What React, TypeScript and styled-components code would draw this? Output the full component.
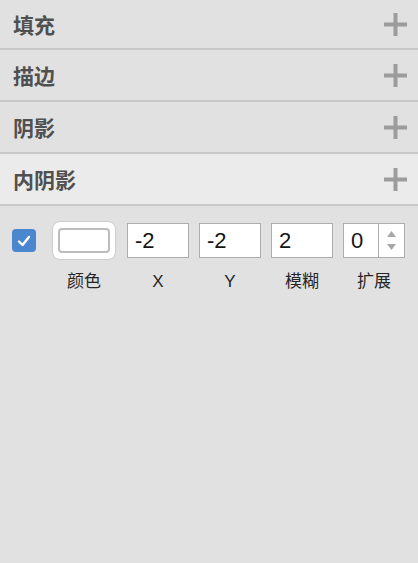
import React from 'react';
import styled, { createGlobalStyle } from 'styled-components';

const GlobalStyle = createGlobalStyle`
    html, body {
        margin: 0;
        padding: 0;
        background: #e1e1e1;
    }
    body {
        width: 418px;
        height: 563px;
        overflow: hidden;
        font-family: "Liberation Sans", "Noto Sans CJK SC", sans-serif;
    }
`;

const Panel = styled.div`
    display: flex;
    flex-direction: column;
    width: 418px;
    height: 563px;
    background: #e1e1e1;
`;

interface SectionHeaderProps {
    active?: boolean;
    first?: boolean;
}

const SectionHeader = styled.div<SectionHeaderProps>`
    display: flex;
    align-items: center;
    justify-content: space-between;
    height: ${props => (props.first ? 48 : 50)}px;
    padding: 0 11px 0 13px;
    border-bottom: 2px solid #c8c8c8;
    background: ${props => (props.active ? '#ebebeb' : '#e1e1e1')};
`;

const SectionTitle = styled.span`
    font-family: "Noto Sans CJK SC", sans-serif;
    font-size: 21px;
    font-weight: 700;
    color: #505050;
    line-height: 1;
`;

const AddButton = styled.button`
    display: flex;
    align-items: center;
    justify-content: center;
    width: 23px;
    height: 23px;
    padding: 0;
    border: none;
    background: none;
`;

const ControlsRow = styled.div`
    display: flex;
    align-items: flex-start;
    padding: 15px 0 0 12px;
`;

interface FieldProps {
    gapAfter: number;
}

const Field = styled.div<FieldProps>`
    display: flex;
    flex-direction: column;
    align-items: center;
    margin-right: ${props => props.gapAfter}px;
`;

const ControlSlot = styled.div`
    display: flex;
    align-items: center;
    height: 39px;
`;

const FieldLabel = styled.span`
    margin-top: 12px;
    font-family: "Liberation Sans", "Noto Sans CJK SC", sans-serif;
    font-size: 17px;
    line-height: 20px;
    color: #262626;
`;

const Checkbox = styled.div`
    display: flex;
    align-items: center;
    justify-content: center;
    width: 24px;
    height: 23px;
    border-radius: 4px;
    background: #4a87cf;
`;

const Swatch = styled.div`
    display: flex;
    align-items: center;
    justify-content: center;
    box-sizing: border-box;
    width: 64px;
    height: 39px;
    border-radius: 8px;
    border: 1px solid #cdcdcd;
    background: #fff;
`;

const SwatchColor = styled.div`
    box-sizing: border-box;
    width: 52px;
    height: 25px;
    border-radius: 4px;
    border: 2px solid #bdbdbd;
    background: #fff;
`;

const NumberBox = styled.div`
    display: flex;
    box-sizing: border-box;
    width: 62px;
    height: 35px;
    border: 1px solid #adadad;
    background: #fff;
`;

const NumberText = styled.span`
    flex: 1;
    padding-left: 7px;
    font-family: "Liberation Sans", Arial, sans-serif;
    font-size: 22px;
    line-height: 33px;
    color: #151515;
`;

const Stepper = styled.div`
    display: flex;
    flex-direction: column;
    align-items: center;
    justify-content: center;
    gap: 7px;
    width: 25px;
    border-left: 1px solid #adadad;
`;

const Plus = () => (
    <svg width="23" height="23" viewBox="0 0 23 23">
        <rect x="9.5" y="0" width="4" height="23" fill="#9c9c9c" />
        <rect x="0" y="9.5" width="23" height="4" fill="#9c9c9c" />
    </svg>
);

const Check = () => (
    <svg width="14" height="12" viewBox="0 0 14 12">
        <path d="M2 6.5 L5.5 10 L12 2" fill="none" stroke="#fff" strokeWidth="2.4" strokeLinecap="round" strokeLinejoin="round" />
    </svg>
);

const Arrow = ({ up }: { up?: boolean }) => (
    <svg width="9" height="6" viewBox="0 0 9 6">
        <path d={up ? 'M4.5 0 L9 6 L0 6 Z' : 'M0 0 L9 0 L4.5 6 Z'} fill="#a8a8a8" />
    </svg>
);

const sections = ['填充', '描边', '阴影', '内阴影'];

const numberFields = [
    { label: 'X', value: '-2' },
    { label: 'Y', value: '-2' },
    { label: '模糊', value: '2' },
];

const App: React.FunctionComponent = () => {
    return (
        <Panel>
            <GlobalStyle />
            {sections.map((title, i) => (
                <SectionHeader key={title} first={i === 0} active={i === sections.length - 1}>
                    <SectionTitle>{title}</SectionTitle>
                    <AddButton><Plus /></AddButton>
                </SectionHeader>
            ))}
            <ControlsRow>
                <Field gapAfter={16}>
                    <ControlSlot>
                        <Checkbox><Check /></Checkbox>
                    </ControlSlot>
                </Field>
                <Field gapAfter={11}>
                    <ControlSlot>
                        <Swatch><SwatchColor /></Swatch>
                    </ControlSlot>
                    <FieldLabel>颜色</FieldLabel>
                </Field>
                {numberFields.map(f => (
                    <Field key={f.label} gapAfter={10}>
                        <ControlSlot>
                            <NumberBox><NumberText>{f.value}</NumberText></NumberBox>
                        </ControlSlot>
                        <FieldLabel>{f.label}</FieldLabel>
                    </Field>
                ))}
                <Field gapAfter={0}>
                    <ControlSlot>
                        <NumberBox>
                            <NumberText>0</NumberText>
                            <Stepper>
                                <Arrow up />
                                <Arrow />
                            </Stepper>
                        </NumberBox>
                    </ControlSlot>
                    <FieldLabel>扩展</FieldLabel>
                </Field>
            </ControlsRow>
        </Panel>
    );
};

export default App;
